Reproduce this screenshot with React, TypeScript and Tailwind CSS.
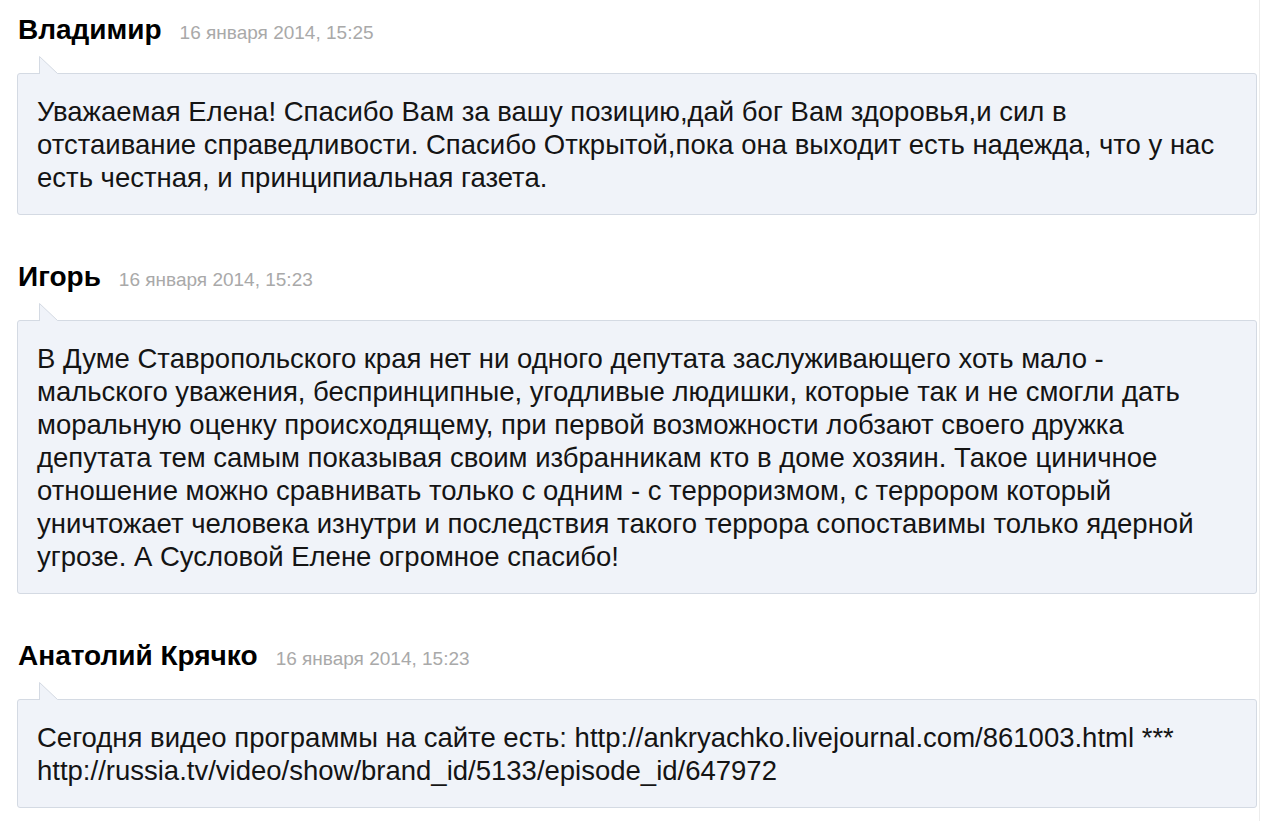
const comments = [
  {
    id: 1,
    author: "Владимир",
    date: "16 января 2014, 15:25",
    text: "Уважаемая Елена! Спасибо Вам за вашу позицию,дай бог Вам здоровья,и сил в отстаивание справедливости. Спасибо Открытой,пока она выходит есть надежда, что у нас есть честная, и принципиальная газета.",
  },
  {
    id: 2,
    author: "Игорь",
    date: "16 января 2014, 15:23",
    text: "В Думе Ставропольского края нет ни одного депутата заслуживающего хоть мало - мальского уважения, беспринципные, угодливые людишки, которые так и не смогли дать моральную оценку происходящему, при первой возможности лобзают своего дружка депутата тем самым показывая своим избранникам кто в доме хозяин. Такое циничное отношение можно сравнивать только с одним - с терроризмом, с террором который уничтожает человека изнутри и последствия такого террора сопоставимы только ядерной угрозе. А Сусловой Елене огромное спасибо!",
  },
  {
    id: 3,
    author: "Анатолий Крячко",
    date: "16 января 2014, 15:23",
    text: "Сегодня видео программы на сайте есть: http://ankryachko.livejournal.com/861003.html *** http://russia.tv/video/show/brand_id/5133/episode_id/647972",
  },
];

function Tail() {
  return (
    <svg
      className="absolute left-[20px] top-[-19px]"
      width="22"
      height="20"
      viewBox="0 0 22 20"
    >
      <polygon points="1.5,1.5 1.5,20 21,20" fill="#f0f3f9" />
      <polyline points="1.5,19 1.5,1.5 19.5,18.5" fill="none" stroke="#d4dae3" strokeWidth="1" />
    </svg>
  );
}

export default function App() {
  return (
    <div className="min-h-screen w-[1260px] bg-white border-r border-[#ececec] pt-[12px] pl-[17px] font-['Liberation_Sans',Arial,sans-serif]">
      {comments.map((c) => (
        <div key={c.id} className="mb-[44px] w-[1240px]">
          {/* Header */}
          <div className="flex items-baseline gap-[18px] pl-[1px] h-[36px] leading-[36px]">
            <span className="text-[28px] font-bold text-black">{c.author}</span>
            <span className="text-[19px] text-[#a9a9a9]">{c.date}</span>
          </div>

          {/* Bubble */}
          <div className="relative mt-[25px] bg-[#f0f3f9] border border-[#d4dae3] rounded-[3px] pt-[21px] pb-[20px] pl-[19px] pr-[27px]">
            <Tail />
            <p className="text-[27.5px] leading-[33px] text-[#141414]">{c.text}</p>
          </div>
        </div>
      ))}
    </div>
  );
}
